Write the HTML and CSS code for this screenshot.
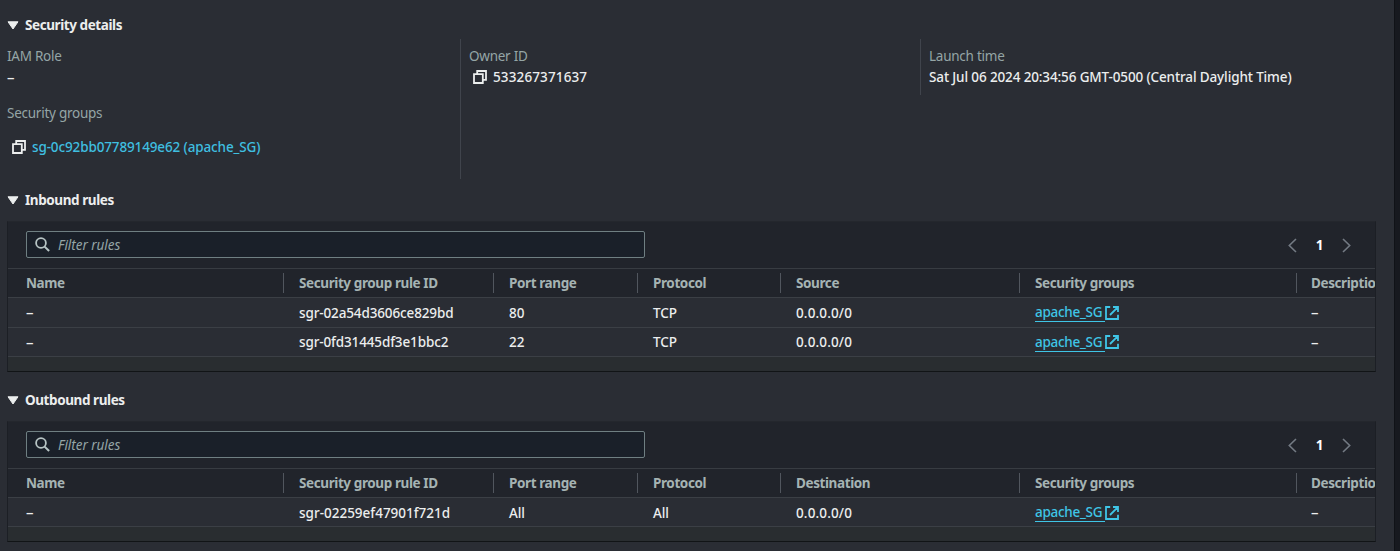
FILE: index.html
```html
<!DOCTYPE html>
<html lang="en">
<head>
<meta charset="utf-8">
<title>Instance security</title>
<link rel="stylesheet" href="styles.css">
</head>
<body>
<svg width="0" height="0" class="sprite">
  <symbol id="caret" viewBox="0 0 12 9"><path d="M1 .8h10L6 8z" fill="currentColor" stroke="currentColor" stroke-linejoin="round"/></symbol>
  <symbol id="copy" viewBox="0 0 14 14"><path d="M1 4.2h8.8V13H1zM4.2 4.2V1H13v8.8H9.8" fill="none" stroke="currentColor" stroke-width="1.8"/></symbol>
  <symbol id="search" viewBox="0 0 15 15"><circle cx="6" cy="6" r="4.9" fill="none" stroke="currentColor" stroke-width="1.8"/><path d="M9.6 9.6l4.5 4.4" stroke="currentColor" stroke-width="2"/></symbol>
  <symbol id="external" viewBox="0 0 14 14"><path d="M5.2 1H1v12h12V8.8M8 1h5v5M12.6 1.4L5 9" fill="none" stroke="currentColor" stroke-width="1.8"/></symbol>
  <symbol id="prev" viewBox="0 0 9 15"><path d="M8 1L1.3 7.5 8 14" fill="none" stroke="currentColor" stroke-width="1.6"/></symbol>
  <symbol id="next" viewBox="0 0 9 15"><path d="M1 1l6.7 6.5L1 14" fill="none" stroke="currentColor" stroke-width="1.6"/></symbol>
</svg>
<main class="page">
  <section>
    <h2 class="heading heading-first"><svg class="caret"><use href="#caret"/></svg><span>Security details</span></h2>
    <div class="details">
      <div class="column">
        <div class="label">IAM Role</div>
        <div class="value dash">–</div>
        <div class="label label-groups">Security groups</div>
        <div class="value copyable group"><svg class="copy"><use href="#copy"/></svg><a class="link">sg-0c92bb07789149e62 (apache_SG)</a></div>
      </div>
      <div class="column column-owner">
        <div class="label">Owner ID</div>
        <div class="value copyable"><svg class="copy"><use href="#copy"/></svg><span class="num">533267371637</span></div>
      </div>
      <div class="column column-launch">
        <div class="label">Launch time</div>
        <div class="value">Sat Jul 06 2024 20:34:56 GMT-0500 (Central Daylight Time)</div>
      </div>
    </div>
  </section>
  <section>
    <h2 class="heading"><svg class="caret"><use href="#caret"/></svg><span>Inbound rules</span></h2>
    <div class="panel">
      <div class="toolbar">
        <div class="search"><svg><use href="#search"/></svg><span>Filter rules</span></div>
        <div class="pager"><svg><use href="#prev"/></svg><b>1</b><svg><use href="#next"/></svg></div>
      </div>
      <div class="row head"><span>Name</span><span>Security group rule ID</span><span>Port range</span><span>Protocol</span><span>Source</span><span>Security groups</span><span>Descriptio</span></div>
      <div class="row"><span class="dash">–</span><span>sgr-02a54d3606ce829bd</span><span class="num">80</span><span>TCP</span><span class="num">0.0.0.0/0</span><span class="ext"><a>apache_SG&nbsp;</a><svg><use href="#external"/></svg></span><span class="dash">–</span></div>
      <div class="row last"><span class="dash">–</span><span>sgr-0fd31445df3e1bbc2</span><span class="num">22</span><span>TCP</span><span class="num">0.0.0.0/0</span><span class="ext"><a>apache_SG&nbsp;</a><svg><use href="#external"/></svg></span><span class="dash">–</span></div>
      <div class="foot"></div>
    </div>
  </section>
  <section class="outbound">
    <h2 class="heading"><svg class="caret"><use href="#caret"/></svg><span>Outbound rules</span></h2>
    <div class="panel">
      <div class="toolbar">
        <div class="search"><svg><use href="#search"/></svg><span>Filter rules</span></div>
        <div class="pager"><svg><use href="#prev"/></svg><b>1</b><svg><use href="#next"/></svg></div>
      </div>
      <div class="row head"><span>Name</span><span>Security group rule ID</span><span>Port range</span><span>Protocol</span><span>Destination</span><span>Security groups</span><span>Descriptio</span></div>
      <div class="row last"><span class="dash">–</span><span class="wide">sgr-02259ef47901f721d</span><span>All</span><span>All</span><span class="num">0.0.0.0/0</span><span class="ext"><a>apache_SG&nbsp;</a><svg><use href="#external"/></svg></span><span class="dash">–</span></div>
      <div class="foot"></div>
    </div>
  </section>
</main>
</body>
</html>
```
FILE: styles.css
```css
* { box-sizing: border-box; }
body {
  margin: 0;
  height: 551px;
  overflow: hidden;
  background: #17191f;
  color: #eceeee;
  font: 500 13.5px/20px "Noto Sans", "Open Sans", sans-serif;
  letter-spacing: -.13px;
}
.sprite { display: none; }
.page {
  width: 1395px;
  height: 551px;
  padding-left: 7px;
  background: #2a2d34;
  border-right: 1px solid #101217;
}
.heading {
  display: flex;
  align-items: center;
  gap: 7px;
  height: 42px;
  margin: 0;
  padding-bottom: 1px;
  font-size: 13.5px;
  font-weight: 700;
  letter-spacing: -.42px;
}
.heading-first { height: 50px; }
.caret { width: 12px; height: 9px; margin: 1px -1px 0 0; color: #eceeee; }
.details {
  display: grid;
  grid-template-columns: 453px 460px 1fr;
  align-items: start;
  height: 140px;
  margin-top: -11px;
}
.column { padding-top: 7px; }
.column-owner { height: 140px; padding-left: 8px; border-left: 1px solid #40444c; }
.column-launch { height: 56px; padding-left: 8px; border-left: 1px solid #40444c; }
.label { height: 21px; color: #95a5a6; font-weight: 400; letter-spacing: -.25px; }
.label-groups { margin-top: 16px; }
.value { height: 20px; white-space: nowrap; }
.num { letter-spacing: .13px; }
.dash { font-size: 15px; }
.copyable { display: flex; align-items: center; gap: 6px; padding-left: 4px; }
.copy { width: 14px; height: 14px; }
.group { margin-top: 13px; padding-left: 5px; }
.link { color: #3fbfe0; }
.panel {
  width: 1369px;
  overflow: hidden;
  border: 1px solid #1c1f25;
  border-top-color: #24272d;
  border-bottom-color: #111416;
}
.outbound { margin-top: 7px; }
.toolbar {
  display: flex;
  align-items: center;
  justify-content: space-between;
  height: 46px;
  padding: 0 24px 1px 18px;
  background: #21242b;
}
.search {
  display: flex;
  align-items: center;
  gap: 8px;
  width: 619px;
  height: 27px;
  padding-left: 8px;
  background: #1a2029;
  border: 1px solid #6f7f82;
  border-radius: 2px;
  color: #95a5a6;
  font-style: italic;
  font-weight: 400;
  letter-spacing: -.04px;
}
.search svg { width: 15px; height: 15px; color: #b7c4c4; }
.pager { display: flex; align-items: center; gap: 18px; padding-top: 1px; }
.pager svg { width: 9px; height: 15px; color: #737a83; }
.pager b { width: 9px; text-align: center; color: #fff; }
.row {
  display: grid;
  grid-template-columns: 275px 210px 144px 143px 239px 277px 100px;
  align-items: center;
  height: 30px;
  border-bottom: 1px solid #3b3f45;
  white-space: nowrap;
}
.row > span { padding-left: 16px; }
.row > span:first-child { padding-left: 18px; }
.row > .dash { padding-bottom: 1px; }
.row > span:last-child { padding-left: 15px; }
.head {
  padding-bottom: 1px;
  background: #21242b;
  border-top: 1px solid #383c42;
  color: #a5b3b3;
  font-weight: 700;
  letter-spacing: -.4px;
}
.head > span + span { padding-left: 15px; border-left: 1px solid #51565e; }
.head > span:last-child { padding-left: 14px; }
.last { height: 29px; }
.outbound .last > span { padding-top: 1px; }
.wide { letter-spacing: 0; }
.foot { height: 14px; background: #292d30; }
.ext { display: flex; align-items: center; color: #3fc5e6; letter-spacing: -.28px; }
.ext a { height: 19px; line-height: 19px; border-bottom: 1px solid currentColor; }
.ext svg { width: 14px; height: 14px; }
```
